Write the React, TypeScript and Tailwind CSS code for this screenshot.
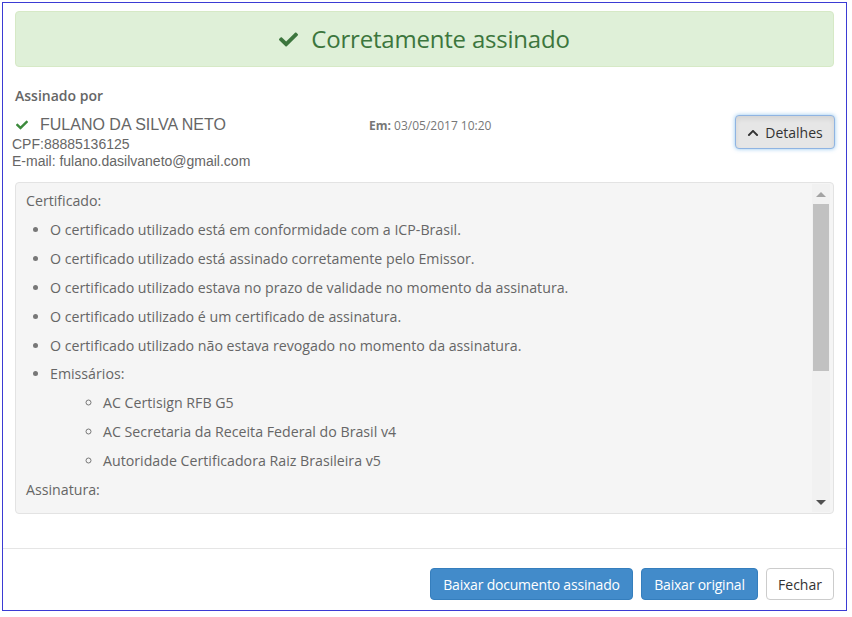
import React from "react";

const CheckIcon = ({ className }: { className?: string }) => (
  <svg viewBox="0 0 512 512" className={className} fill="currentColor">
    <path d="M173.898 439.404l-166.4-166.4c-9.997-9.997-9.997-26.206 0-36.204l36.203-36.204c9.997-9.998 26.207-9.998 36.204 0L192 312.69 432.095 72.596c9.997-9.997 26.207-9.997 36.204 0l36.203 36.204c9.997 9.997 9.997 26.206 0 36.204l-294.4 294.401c-9.998 9.997-26.207 9.997-36.204-.001z" />
  </svg>
);

const ChevronUp = ({ className }: { className?: string }) => (
  <svg viewBox="0 0 448 512" className={className} fill="currentColor">
    <path d="M240.971 130.524l194.343 194.343c9.373 9.373 9.373 24.569 0 33.941l-22.667 22.667c-9.357 9.357-24.522 9.375-33.901.04L224 227.495 69.255 381.516c-9.379 9.335-24.544 9.317-33.901-.04l-22.667-22.667c-9.373-9.373-9.373-24.569 0-33.941L207.03 130.525c9.372-9.373 24.568-9.373 33.941-.001z" />
  </svg>
);

const certItems = [
  "O certificado utilizado está em conformidade com a ICP-Brasil.",
  "O certificado utilizado está assinado corretamente pelo Emissor.",
  "O certificado utilizado estava no prazo de validade no momento da assinatura.",
  "O certificado utilizado é um certificado de assinatura.",
  "O certificado utilizado não estava revogado no momento da assinatura.",
];

const issuers = [
  "AC Certisign RFB G5",
  "AC Secretaria da Receita Federal do Brasil v4",
  "Autoridade Certificadora Raiz Brasileira v5",
];

export default function App() {
  return (
    <div className="w-[852px] h-[617px] bg-white pt-[2px] pl-[2px] font-['Open_Sans',sans-serif]">
      <div className="w-[845px] h-[609px] border border-[#3b3bd4] flex flex-col">
        {/* Body */}
        <div className="px-[12px] pt-[8px] pb-[34px]">
          <div className="h-[56px] rounded-[4px] border border-[#d6e9c6] bg-[#dff0d8] text-[#3c763d] flex items-center justify-center gap-[13px]">
            <CheckIcon className="w-[19px] h-[19px] mt-[1px]" />
            <span className="text-[24px] leading-[30px] tracking-[-0.2px]">Corretamente assinado</span>
          </div>

          <div className="mt-[19px] text-[14px] leading-[20px] font-semibold text-[#666]">Assinado por</div>

          <div className="mt-[8px] h-[55px] flex items-start">
            <div className="w-[354px] pt-[1px]">
              <div className="flex items-center h-[20px] pl-[1px]">
                <CheckIcon className="w-[12px] h-[12px] text-[#3c8a3c]" />
                <span className="ml-[12px] text-[16px] leading-[20px] text-[#666] font-['Liberation_Sans',Arial,sans-serif]">
                  FULANO DA SILVA NETO
                </span>
              </div>
              <div className="mt-[1px] -ml-[3px] text-[14px] leading-[17px] text-[#666] font-['Liberation_Sans',Arial,sans-serif]">
                <div>CPF:88885136125</div>
                <div>E-mail: fulano.dasilvaneto@gmail.com</div>
              </div>
            </div>
            <div className="flex-1 mt-[3px] text-[12px] leading-[18px] text-[#777]">
              <span className="font-bold">Em:</span> 03/05/2017 10:20
            </div>
            <button className="mt-[1px] -mr-[1px] w-[100px] h-[34px] rounded-[4px] border border-[#8fb4e2] bg-[#e6e6e6] text-[#333] text-[14px] flex items-center justify-center gap-[6px] shadow-[inset_0_3px_5px_rgba(0,0,0,0.08),0_0_4px_rgba(102,175,233,0.7)]">
              <ChevronUp className="w-[12px] h-[12px] mt-[1px]" />
              <span>Detalhes</span>
            </button>
          </div>

          <div className="mt-[13px] h-[332px] rounded-[4px] border border-[#e3e3e3] bg-[#f5f5f5] flex text-[14.2px] leading-[28.9px] text-[#666]">
            <div className="flex-1 overflow-hidden pl-[10px] pt-[4px]">
              <div>Certificado:</div>
              <ul className="list-disc pl-[24px] marker:text-[#777]">
                {certItems.map((t) => (
                  <li key={t}>{t}</li>
                ))}
                <li>
                  Emissários:
                  <ul className="list-[circle] pl-[53px]">
                    {issuers.map((t) => (
                      <li key={t}>{t}</li>
                    ))}
                  </ul>
                </li>
              </ul>
              <div>Assinatura:</div>
              <ul className="list-disc pl-[24px] marker:text-[#777]">
                <li>A assinatura utilizada está em conformidade com a ICP-Brasil.</li>
                <li>A assinatura está íntegra.</li>
              </ul>
            </div>
            <div className="w-[18px] mr-[3px] my-[1px] bg-[#f1f1f1] flex flex-col">
              <div className="h-[20px] flex items-center justify-center">
                <div className="w-0 h-0 border-l-[5px] border-r-[5px] border-b-[5px] border-l-transparent border-r-transparent border-b-[#a3a3a3]" />
              </div>
              <div className="h-[167px] mx-[1px] bg-[#c1c1c1]" />
              <div className="flex-1" />
              <div className="h-[20px] flex items-center justify-center">
                <div className="w-0 h-0 border-l-[5px] border-r-[5px] border-t-[5px] border-l-transparent border-r-transparent border-t-[#505050]" />
              </div>
            </div>
          </div>
        </div>

        {/* Footer */}
        <div className="border-t border-[#e5e5e5] pt-[19px] px-[12px] flex justify-end gap-[8px]">
          <button className="w-[203px] h-[32px] rounded-[4px] border border-[#357ebd] bg-[#428bca] text-white text-[14px] tracking-[-0.2px]">
            Baixar documento assinado
          </button>
          <button className="w-[117px] h-[32px] rounded-[4px] border border-[#357ebd] bg-[#428bca] text-white text-[14px] tracking-[-0.2px]">
            Baixar original
          </button>
          <button className="w-[68px] h-[32px] rounded-[4px] border border-[#cccccc] bg-white text-[#333] text-[14px]">
            Fechar
          </button>
        </div>
      </div>
    </div>
  );
}
